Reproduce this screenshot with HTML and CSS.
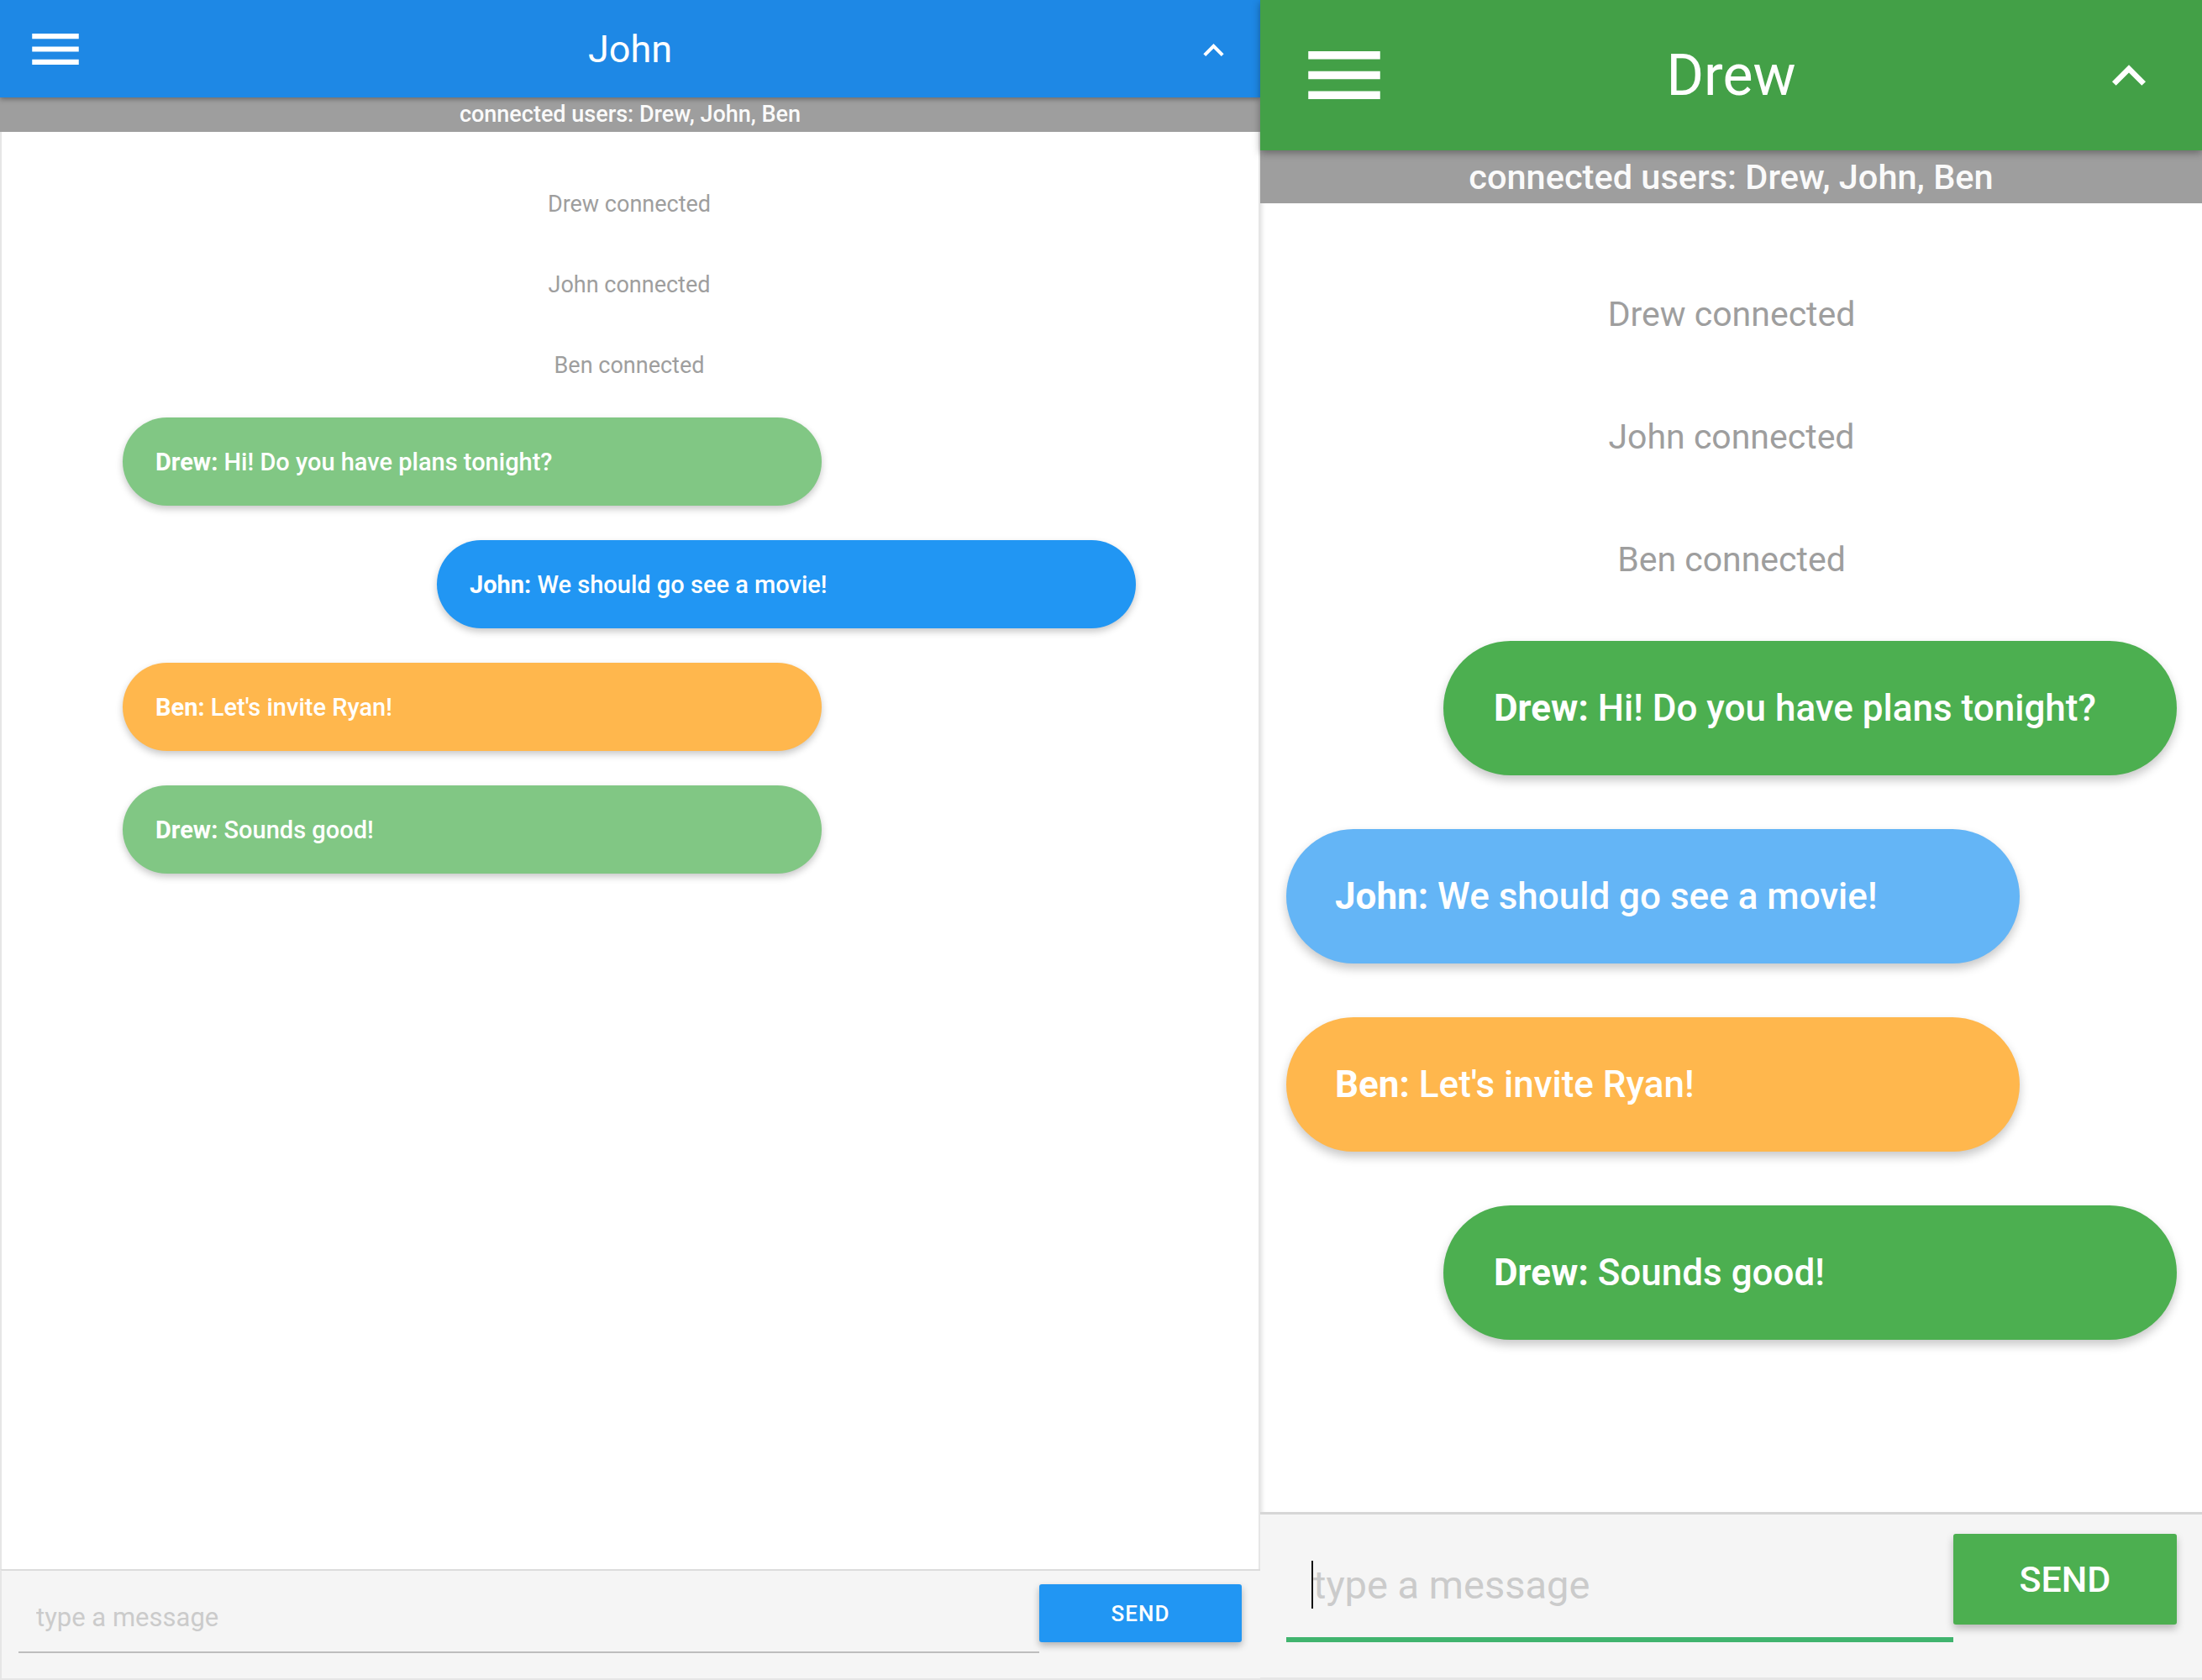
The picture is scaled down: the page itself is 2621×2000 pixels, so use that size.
FILE: index.html
```html
<!DOCTYPE html>
<html lang="en">
<head>
<meta charset="utf-8">
<title>Chat</title>
<link rel="stylesheet" href="styles.css">
</head>
<body>
<div class="app">
  <section class="chat chat--john">
    <header class="appbar">
      <button class="icon-btn menu-btn" aria-label="menu">
        <svg viewBox="3 6 18 12" class="menu-icon"><path d="M3 18h18v-2H3v2zm0-5h18v-2H3v2zm0-7v2h18V6H3z"/></svg>
      </button>
      <h1 class="appbar-title">John</h1>
      <button class="icon-btn collapse-btn" aria-label="collapse">
        <svg viewBox="6 8 12 7.41" class="chevron-icon"><path d="M12 8l-6 6 1.41 1.41L12 10.83l4.59 4.58L18 14z"/></svg>
      </button>
    </header>
    <div class="users-bar">connected users: Drew, John, Ben</div>
    <main class="messages">
      <p class="notice">Drew connected</p>
      <p class="notice">John connected</p>
      <p class="notice">Ben connected</p>
      <div class="bubble bubble--other bubble--drew-light"><b>Drew:</b>&nbsp;Hi! Do you have plans tonight?</div>
      <div class="bubble bubble--own bubble--john"><b>John:</b>&nbsp;We should go see a movie!</div>
      <div class="bubble bubble--other bubble--ben"><b>Ben:</b>&nbsp;Let's invite Ryan!</div>
      <div class="bubble bubble--other bubble--drew-light"><b>Drew:</b>&nbsp;Sounds good!</div>
    </main>
    <footer class="composer">
      <label class="field">
        <input class="field-input" type="text" placeholder="type a message">
      </label>
      <button class="send-btn">SEND</button>
    </footer>
  </section>

  <section class="chat chat--drew">
    <header class="appbar">
      <button class="icon-btn menu-btn" aria-label="menu">
        <svg viewBox="3 6 18 12" class="menu-icon"><path d="M3 18h18v-2H3v2zm0-5h18v-2H3v2zm0-7v2h18V6H3z"/></svg>
      </button>
      <h1 class="appbar-title">Drew</h1>
      <button class="icon-btn collapse-btn" aria-label="collapse">
        <svg viewBox="6 8 12 7.41" class="chevron-icon"><path d="M12 8l-6 6 1.41 1.41L12 10.83l4.59 4.58L18 14z"/></svg>
      </button>
    </header>
    <div class="users-bar">connected users: Drew, John, Ben</div>
    <main class="messages">
      <p class="notice">Drew connected</p>
      <p class="notice">John connected</p>
      <p class="notice">Ben connected</p>
      <div class="bubble bubble--own bubble--drew"><b>Drew:</b>&nbsp;Hi! Do you have plans tonight?</div>
      <div class="bubble bubble--other bubble--john-light"><b>John:</b>&nbsp;We should go see a movie!</div>
      <div class="bubble bubble--other bubble--ben"><b>Ben:</b>&nbsp;Let's invite Ryan!</div>
      <div class="bubble bubble--own bubble--drew"><b>Drew:</b>&nbsp;Sounds good!</div>
    </main>
    <footer class="composer">
      <label class="field field--focused">
        <input class="field-input" type="text" placeholder="type a message">
      </label>
      <button class="send-btn">SEND</button>
    </footer>
  </section>
</div>
</body>
</html>
```

FILE: styles.css
```css
* { box-sizing: border-box; }

html, body {
  margin: 0;
  padding: 0;
  background: #fff;
}

body {
  font-family: Roboto, "Liberation Sans", Arial, sans-serif;
  color: #212121;
}

.app {
  display: flex;
  width: 2621px;
  height: 2000px;
}

.chat {
  display: flex;
  flex-direction: column;
  height: 2000px;
  background: #fff;
}

.chat--john { width: 1500px; flex: 0 0 1500px; }
.chat--drew { flex: 1 1 auto; }

/* ---------- app bar ---------- */
.appbar {
  position: relative;
  z-index: 2;
  display: grid;
  grid-template-columns: 1fr auto 1fr;
  align-items: center;
  color: #fff;
}

.chat--john .appbar {
  height: 116px;
  padding: 0 38px;
  background: #1e88e5;
  box-shadow: 0 2px 6px rgba(0, 0, 0, 0.35);
}

.chat--drew .appbar {
  height: 179px;
  padding: 0 57px;
  background: #43a047;
  box-shadow: 0 3px 9px rgba(0, 0, 0, 0.35);
}

.icon-btn {
  display: flex;
  align-items: center;
  justify-content: center;
  padding: 0;
  border: 0;
  background: none;
  color: #fff;
}

.menu-btn { justify-self: start; }
.collapse-btn { justify-self: end; }

.icon-btn svg { fill: currentColor; display: block; }

.chat--john .menu-icon { width: 56px; height: 37px; }
.chat--john .chevron-icon { width: 25px; height: 15px; margin: 3px 5px 0 0; }
.chat--drew .menu-icon { width: 86px; height: 57px; }
.chat--drew .chevron-icon { width: 40px; height: 25px; margin-right: 10px; }

.appbar-title {
  margin: 0;
  font-weight: 400;
  text-align: center;
}

.chat--john .appbar-title { font-size: 45px; line-height: 52px; margin-top: 2px; }
.chat--drew .appbar-title { font-size: 68px; line-height: 80px; }

/* ---------- users bar ---------- */
.users-bar {
  position: relative;
  z-index: 1;
  background: #9e9e9e;
  color: #fafafa;
  font-weight: 500;
  text-align: center;
}

.chat--john .users-bar { height: 41px; font-size: 27px; line-height: 41px; }
.chat--drew .users-bar { height: 63px; font-size: 41.5px; line-height: 63px; }

/* ---------- messages ---------- */
.messages {
  flex: 1 1 auto;
  display: flex;
  flex-direction: column;
}

.chat--john .messages {
  padding: 38px 146px 0 144px;
  border-left: 2px solid #e6e6e6;
  border-right: 2px solid #e6e6e6;
}

.chat--drew .messages {
  padding: 59px 30px 0 31px;
  box-shadow: inset 5px 0 5px -3px rgba(0, 0, 0, 0.12);
}

.notice {
  margin: 0;
  color: #9e9e9e;
  text-align: center;
}

.chat--john .notice { font-size: 27px; line-height: 32px; padding: 32px 0; }
.chat--drew .notice { font-size: 41px; line-height: 50px; padding: 48px 0; }

.bubble {
  display: flex;
  align-items: center;
  color: #fff;
  font-weight: 500;
  white-space: nowrap;
}

.bubble b { font-weight: 700; }

.chat--john .bubble {
  width: 832px;
  height: 105px;
  margin-top: 41px;
  padding-left: 39px;
  border-radius: 53px;
  font-size: 29px;
  box-shadow: 0 4px 8px rgba(0, 0, 0, 0.22);
}

.chat--john .notice + .bubble { margin-top: 14px; }

.chat--drew .bubble {
  width: 873px;
  height: 160px;
  margin-top: 64px;
  padding-left: 58px;
  border-radius: 80px;
  font-size: 44px;
  box-shadow: 0 6px 12px rgba(0, 0, 0, 0.22);
}

.chat--drew .notice + .bubble { margin-top: 24px; }
.chat--drew .bubble--own { padding-left: 60px; }

.bubble--other { align-self: flex-start; }
.bubble--own { align-self: flex-end; }

.bubble--drew-light { background: #81c784; }
.bubble--drew { background: #4caf50; }
.bubble--john { background: #2196f3; }
.bubble--john-light { background: #64b5f6; }
.bubble--ben { background: #ffb74d; }

/* ---------- composer ---------- */
.composer {
  display: flex;
  align-items: flex-start;
  background: #f5f5f5;
}

.chat--john .composer {
  height: 132px;
  padding: 16px 22px 0 20px;
  border-top: 2px solid #dcdcdc;
  border-left: 2px solid #e6e6e6;
  border-bottom: 2px solid #e6e6e6;
}

.chat--drew .composer {
  height: 200px;
  padding: 23px 30px 0 31px;
  border-top: 3px solid #d6d6d6;
  border-bottom: 3px solid #e6e6e6;
}

.field {
  position: relative;
  flex: 1 1 auto;
  display: flex;
  align-items: center;
}

.chat--john .field { height: 82px; border-bottom: 2px solid #bdbdbd; }
.chat--drew .field { height: 129px; border-bottom: 6px solid #40b46e; }

.field-input {
  width: 100%;
  border: 0;
  outline: 0;
  background: transparent;
  font-family: inherit;
  color: #212121;
}

.field-input::placeholder { color: #cbcbcb; }

.chat--john .field-input { font-size: 31px; padding: 0 0 0 21px; margin-top: -2px; }
.chat--drew .field-input { font-size: 47px; padding: 0 0 0 32px; margin-top: -3px; }

.field--focused::before {
  content: "";
  position: absolute;
  left: 30px;
  top: 32px;
  width: 2px;
  height: 57px;
  background: #111;
}

.send-btn {
  flex: 0 0 auto;
  border: 0;
  border-radius: 3px;
  color: #fff;
  font-family: inherit;
  font-weight: 500;
}

.chat--john .send-btn {
  width: 241px;
  height: 69px;
  background: #2196f3;
  font-size: 26px;
  letter-spacing: 1px;
  box-shadow: 0 4px 8px rgba(0, 0, 0, 0.28);
}

.chat--drew .send-btn {
  width: 266px;
  height: 108px;
  background: #4caf50;
  font-size: 43px;
  box-shadow: 0 5px 10px rgba(0, 0, 0, 0.25);
}
```
